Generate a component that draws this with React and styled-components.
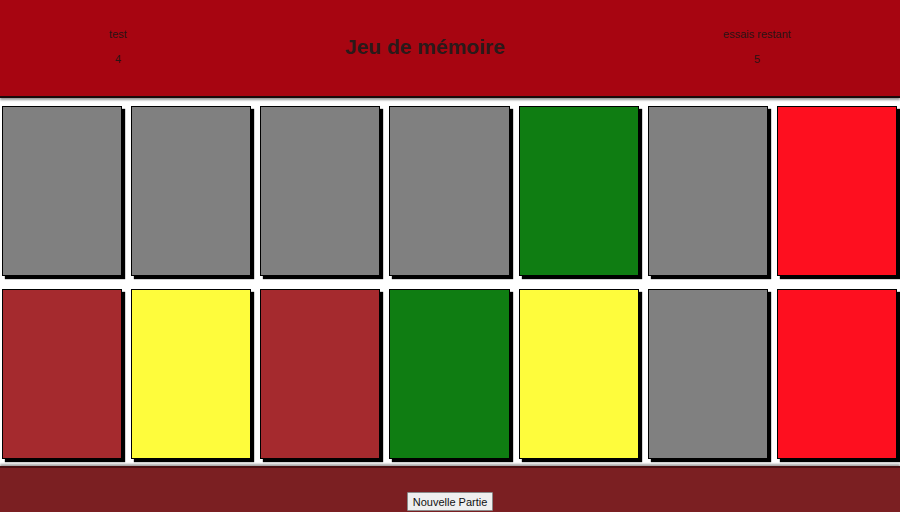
import React from "react";
import styled, { createGlobalStyle } from "styled-components";

const Global = createGlobalStyle`
  html, body { margin: 0; padding: 0; background: #fff; }
  body { font-family: "Liberation Sans", Arial, sans-serif; overflow: hidden; }
`;

const Page = styled.div`
  display: flex;
  flex-direction: column;
  min-height: 512px;
`;

const Header = styled.header`
  box-sizing: border-box;
  height: 98px;
  padding-bottom: 3px;
  background: #a70511;
  border-bottom: 2px solid #1a0a0a;
  box-shadow: 0 2px 2px #9a9a9a;
  display: flex;
  justify-content: space-around;
  align-items: center;
  color: #2a1414;
`;

const Stat = styled.div`
  display: flex;
  flex-direction: column;
  align-items: center;
  gap: 12px;
  font-size: 11px;
  line-height: 13px;
`;

const Title = styled.h1`
  margin: 0;
  font-size: 21px;
  font-weight: bold;
  color: #2a1a1a;
`;

const Board = styled.main`
  display: grid;
  grid-template-columns: repeat(7, 1fr);
  column-gap: 9px;
  row-gap: 13px;
  padding: 8px 3px 7px 2px;
`;

const Card = styled.div`
  height: 168px;
  background: ${(p) => p.$color};
  border: 1px solid #000;
  box-shadow: 3px 3px 1px #000;
`;

const Footer = styled.footer`
  flex: 1;
  background: #7b1f22;
  border-top: 2px solid #4a1012;
  box-shadow: 0 -2px 2px #a8a8a8;
  display: flex;
  justify-content: center;
  padding-top: 24px;
`;

const Button = styled.button`
  height: 19px;
  padding: 0 5px;
  font-family: "Liberation Sans", Arial, sans-serif;
  font-size: 11px;
  color: #111;
  background: #efefef;
  border: 1px solid #8a8a8a;
  border-radius: 1px;
`;

const COLORS = {
  gray: "#808080",
  green: "#0f7d12",
  red: "#fe0f1f",
  brown: "#a52a2e",
  yellow: "#fefc3c",
};

const cards = [
  "gray", "gray", "gray", "gray", "green", "gray", "red",
  "brown", "yellow", "brown", "green", "yellow", "gray", "red",
];

export default function App() {
  return (
    <Page>
      <Global />
      <Header>
        <Stat>
          <span>test</span>
          <span>4</span>
        </Stat>
        <Title>Jeu de mémoire</Title>
        <Stat>
          <span>essais restant</span>
          <span>5</span>
        </Stat>
      </Header>
      <Board>
        {cards.map((c, i) => (
          <Card key={i} $color={COLORS[c]} />
        ))}
      </Board>
      <Footer>
        <Button>Nouvelle Partie</Button>
      </Footer>
    </Page>
  );
}
